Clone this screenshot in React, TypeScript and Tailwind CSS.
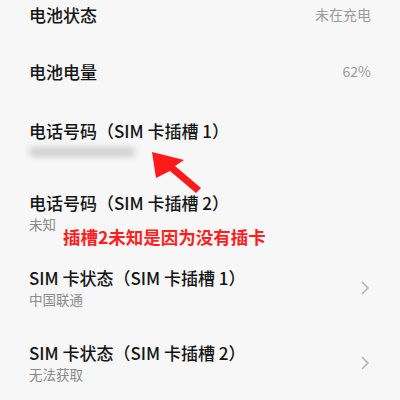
const font = { fontFamily: '"Noto Sans CJK SC", "Noto Sans", sans-serif' }

function Row({
  title,
  sub,
  value,
  arrow,
  tall,
}: {
  title: string
  sub?: React.ReactNode
  value?: string
  arrow?: boolean
  tall?: boolean
}) {
  return (
    <div className={`flex items-center justify-between px-[29px] ${tall ? 'h-[75px]' : 'h-[57px]'}`}>
      <div className="flex flex-col">
        <div className="text-[17px] leading-[24px] font-medium text-[#151515]">{title}</div>
        {sub && <div className="text-[13.5px] leading-[19px] text-[#8a8a8a]">{sub}</div>}
      </div>
      {value && <div className="text-[14px] text-[#9a9a9a]">{value}</div>}
      {arrow && (
        <svg width="10" height="14" viewBox="0 0 10 14" className="mr-[1px]">
          <polyline points="2,1 8,7 2,13" fill="none" stroke="#ababab" strokeWidth="1.4" />
        </svg>
      )}
    </div>
  )
}

export default function App() {
  return (
    <div className="w-[400px] h-[400px] overflow-hidden bg-[#f7f7f7] relative" style={font}>
      <div className="flex flex-col -mt-[14px]">
        <Row title="电池状态" value="未在充电" />
        <Row title="电池电量" value="62%" />
        <Row
          tall
          title="电话号码（SIM 卡插槽 1）"
          sub={<div className="mt-[4px] h-[10px] w-[106px] rounded-full bg-[#cfcfcf] blur-[3px]" />}
        />
        <Row tall title="电话号码（SIM 卡插槽 2）" sub="未知" />
        <Row tall title="SIM 卡状态（SIM 卡插槽 1）" sub="中国联通" arrow />
        <Row tall title="SIM 卡状态（SIM 卡插槽 2）" sub="无法获取" arrow />
      </div>

      {/* annotation */}
      <svg className="absolute left-0 top-0" width="400" height="400" viewBox="0 0 400 400">
        <polygon points="152,152 184,160 175,166 201,188 196,193 170,171 156,178" fill="#ff1a1a" />
      </svg>
      <div className="absolute left-[63px] top-[226px] text-[17.5px] leading-[22px] font-bold text-[#ff1e1e]">
        插槽2未知是因为没有插卡
      </div>
    </div>
  )
}
